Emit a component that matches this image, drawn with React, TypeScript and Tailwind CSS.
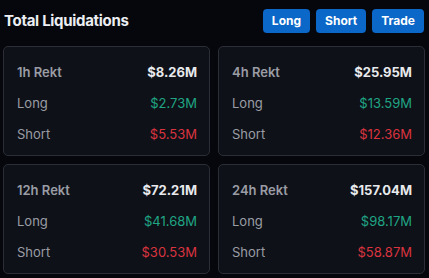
import React from 'react';

type Rekt = { period: string; total: string; long: string; short: string };

const stats: Rekt[] = [
  { period: '1h', total: '$8.26M', long: '$2.73M', short: '$5.53M' },
  { period: '4h', total: '$25.95M', long: '$13.59M', short: '$12.36M' },
  { period: '12h', total: '$72.21M', long: '$41.68M', short: '$30.53M' },
  { period: '24h', total: '$157.04M', long: '$98.17M', short: '$58.87M' },
];

const RektCard: React.FC<{ item: Rekt }> = ({ item }) => (
  <div className="bg-[#0f1118] border border-[#2b2e36] rounded-[5px] pl-[13px] pr-[12px] pt-[10px] pb-[5px] flex flex-col">
    <div className="h-[31px] flex items-center justify-between">
      <span className="text-[13px] font-semibold text-[#9a9da5]">{item.period} Rekt</span>
      <span className="text-[13px] font-bold text-[#e8e9ec]">{item.total}</span>
    </div>
    <div className="h-[31px] flex items-center justify-between">
      <span className="text-[13px] text-[#9a9da5]">Long</span>
      <span className="text-[13px] text-[#1fa584]">{item.long}</span>
    </div>
    <div className="h-[31px] flex items-center justify-between">
      <span className="text-[13px] text-[#9a9da5]">Short</span>
      <span className="text-[13px] text-[#d9343f]">{item.short}</span>
    </div>
  </div>
);

export default function App() {
  return (
    <div className="w-[429px] h-[278px] bg-[#05070c] font-['Inter',sans-serif] overflow-hidden">
      {/* Header */}
      <div className="h-[42px] pl-[4px] pr-[5px] pt-[9px] flex items-start justify-between">
        <h1 className="text-[15px] font-bold text-[#eceef2] tracking-[-0.3px] leading-[24px]">Total Liquidations</h1>
        <div className="flex gap-[6px]">
          {['Long', 'Short', 'Trade'].map((label) => (
            <button
              key={label}
              className="h-[24px] px-[9px] rounded-[4px] bg-[#0b67c8] text-white text-[12px] font-bold leading-none"
            >
              {label}
            </button>
          ))}
        </div>
      </div>

      {/* Cards */}
      <div className="grid grid-cols-2 gap-[8px] pl-[3px] pr-[4px] pt-[4px]">
        {stats.map((s) => (
          <RektCard key={s.period} item={s} />
        ))}
      </div>
    </div>
  );
}
